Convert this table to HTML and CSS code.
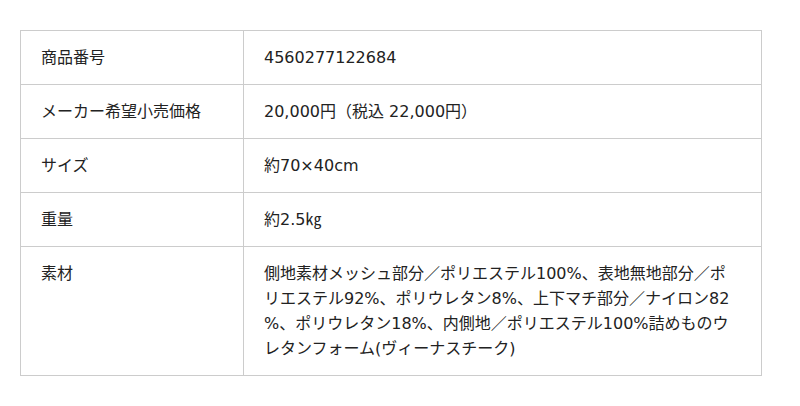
FILE: index.html
```html
<!DOCTYPE html>
<html lang="ja">
<head>
<meta charset="utf-8">
<link rel="stylesheet" href="styles.css">
</head>
<body>
<table class="spec">
  <colgroup>
    <col class="spec-col-label">
    <col class="spec-col-value">
  </colgroup>
  <tbody>
    <tr><th class="spec-label">商品番号</th><td class="spec-value">4560277122684</td></tr>
    <tr><th class="spec-label">メーカー希望小売価格</th><td class="spec-value">20,000円（税込 22,000円）</td></tr>
    <tr><th class="spec-label">サイズ</th><td class="spec-value">約70×40cm</td></tr>
    <tr><th class="spec-label">重量</th><td class="spec-value">約2.5㎏</td></tr>
    <tr><th class="spec-label">素材</th><td class="spec-value">側地素材メッシュ部分／ポリエステル100%、表地無地部分／ポリエステル92%、ポリウレタン8%、上下マチ部分／ナイロン82%、ポリウレタン18%、内側地／ポリエステル100%詰めものウレタンフォーム(ヴィーナスチーク)</td></tr>
  </tbody>
</table>
</body>
</html>
```

FILE: styles.css
```css
html, body {
  margin: 0;
  padding: 0;
  background: #ffffff;
}
body {
  padding: 30px 20px 0 20px;
  font-family: "DejaVu Sans", "Noto Sans CJK JP", sans-serif;
  font-size: 16px;
  color: #222222;
}
.spec {
  width: 742px;
  border-collapse: collapse;
  table-layout: fixed;
}
.spec-col-label {
  width: 223px;
}
.spec-label,
.spec-value {
  border: 1px solid #cccccc;
  padding: 14px 20px;
  line-height: 25px;
  text-align: left;
  vertical-align: top;
  font-weight: normal;
  word-break: break-all;
  line-break: anywhere;
}
```
